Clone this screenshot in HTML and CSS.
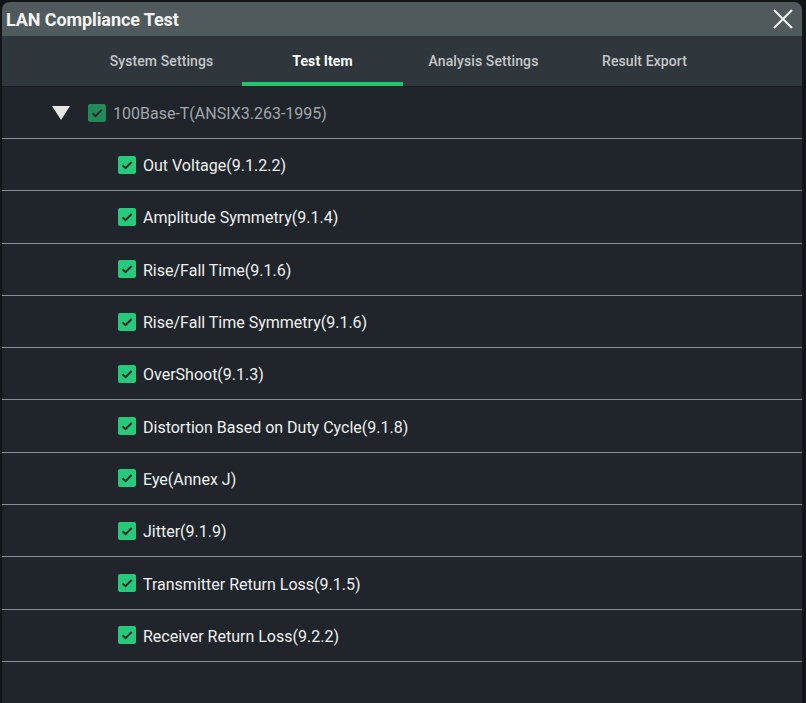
FILE: index.html
```html
<!DOCTYPE html>
<html>
<head>
<meta charset="utf-8">
<link rel="stylesheet" href="styles.css">
</head>
<body>
<div class="dialog">
  <div class="titlebar">
    <span class="title">LAN Compliance Test</span>
    <svg class="close" width="22" height="22" viewBox="0 0 22 22"><path d="M2 2 L20 20 M20 2 L2 20" stroke="#f2f2f2" stroke-width="2" fill="none"/></svg>
  </div>
  <div class="tabs">
    <div class="tab">System Settings</div>
    <div class="tab active">Test Item</div>
    <div class="tab">Analysis Settings</div>
    <div class="tab">Result Export</div>
  </div>
  <div class="content">
    <div class="row header">
      <span class="tri"></span>
      <span class="cb dim"><svg width="18" height="18" viewBox="0 0 18 18"><path d="M4.5 9.2 L7.6 12.2 L13.6 6" stroke="#1e2a26" stroke-width="2" fill="none"/></svg></span>
      <span class="label dimtext">100Base-T(ANSIX3.263-1995)</span>
    </div>
    <div class="row item"><span class="cb"><svg width="18" height="18" viewBox="0 0 18 18"><path d="M4.5 9.2 L7.6 12.2 L13.6 6" stroke="#1e2a26" stroke-width="2" fill="none"/></svg></span><span class="label">Out Voltage(9.1.2.2)</span></div>
    <div class="row item"><span class="cb"><svg width="18" height="18" viewBox="0 0 18 18"><path d="M4.5 9.2 L7.6 12.2 L13.6 6" stroke="#1e2a26" stroke-width="2" fill="none"/></svg></span><span class="label">Amplitude Symmetry(9.1.4)</span></div>
    <div class="row item"><span class="cb"><svg width="18" height="18" viewBox="0 0 18 18"><path d="M4.5 9.2 L7.6 12.2 L13.6 6" stroke="#1e2a26" stroke-width="2" fill="none"/></svg></span><span class="label">Rise/Fall Time(9.1.6)</span></div>
    <div class="row item"><span class="cb"><svg width="18" height="18" viewBox="0 0 18 18"><path d="M4.5 9.2 L7.6 12.2 L13.6 6" stroke="#1e2a26" stroke-width="2" fill="none"/></svg></span><span class="label">Rise/Fall Time Symmetry(9.1.6)</span></div>
    <div class="row item"><span class="cb"><svg width="18" height="18" viewBox="0 0 18 18"><path d="M4.5 9.2 L7.6 12.2 L13.6 6" stroke="#1e2a26" stroke-width="2" fill="none"/></svg></span><span class="label">OverShoot(9.1.3)</span></div>
    <div class="row item"><span class="cb"><svg width="18" height="18" viewBox="0 0 18 18"><path d="M4.5 9.2 L7.6 12.2 L13.6 6" stroke="#1e2a26" stroke-width="2" fill="none"/></svg></span><span class="label">Distortion Based on Duty Cycle(9.1.8)</span></div>
    <div class="row item"><span class="cb"><svg width="18" height="18" viewBox="0 0 18 18"><path d="M4.5 9.2 L7.6 12.2 L13.6 6" stroke="#1e2a26" stroke-width="2" fill="none"/></svg></span><span class="label">Eye(Annex J)</span></div>
    <div class="row item"><span class="cb"><svg width="18" height="18" viewBox="0 0 18 18"><path d="M4.5 9.2 L7.6 12.2 L13.6 6" stroke="#1e2a26" stroke-width="2" fill="none"/></svg></span><span class="label">Jitter(9.1.9)</span></div>
    <div class="row item"><span class="cb"><svg width="18" height="18" viewBox="0 0 18 18"><path d="M4.5 9.2 L7.6 12.2 L13.6 6" stroke="#1e2a26" stroke-width="2" fill="none"/></svg></span><span class="label">Transmitter Return Loss(9.1.5)</span></div>
    <div class="row item"><span class="cb"><svg width="18" height="18" viewBox="0 0 18 18"><path d="M4.5 9.2 L7.6 12.2 L13.6 6" stroke="#1e2a26" stroke-width="2" fill="none"/></svg></span><span class="label">Receiver Return Loss(9.2.2)</span></div>
  </div>
</div>
</body>
</html>
```
FILE: styles.css
```css
html, body {
  margin: 0;
  padding: 0;
  background: #121517;
  height: 703px;
  overflow: hidden;
  font-family: Roboto, "Liberation Sans", sans-serif;
}
.dialog {
  margin: 2px 4px 0 2px;
  height: 701px;
  border-radius: 8px 8px 0 0;
  overflow: hidden;
  background: #1f252b;
  display: flex;
  flex-direction: column;
}
.titlebar {
  height: 34px;
  background: #505a5c;
  display: flex;
  align-items: center;
  justify-content: space-between;
  padding: 0 8px 0 4px;
  flex: none;
}
.title {
  color: #f4f4f4;
  font-size: 18px;
  font-weight: 700;
  letter-spacing: -0.1px;
}
.close {
  display: block;
}
.tabs {
  height: 50px;
  background: #30373c;
  display: flex;
  padding-left: 79px;
  border-bottom: 1px solid #1a1e22;
  flex: none;
}
.tab {
  width: 161px;
  box-sizing: border-box;
  text-align: center;
  font-size: 14px;
  font-weight: 500;
  color: #c3c7ca;
  border-bottom: 4px solid transparent;
  line-height: 50px;
  letter-spacing: 0.1px;
}
.tab.active {
  color: #ffffff;
  font-weight: 700;
  border-bottom-color: #22c46e;
}
.content {
  flex: 1;
}
.row {
  height: 51.3px;
  border-bottom: 1px solid #888e92;
  display: flex;
  align-items: center;
  box-sizing: content-box;
}
.header {
  padding-left: 50px;
  height: 51px;
}
.item {
  padding-left: 116px;
}
.tri {
  width: 0;
  height: 0;
  border-left: 9px solid transparent;
  border-right: 9px solid transparent;
  border-top: 14px solid #e6e6e6;
  margin-right: 18px;
}
.cb {
  width: 18px;
  height: 18px;
  border-radius: 2px;
  background: #27c97c;
  display: inline-block;
  margin-right: 7px;
  flex: none;
}
.cb svg {
  display: block;
}
.cb.dim {
  background: #218a5b;
}
.label {
  font-size: 16px;
  color: #f0f0f0;
  padding-top: 2px;
}
.dimtext {
  color: #a2a6aa;
}
```
